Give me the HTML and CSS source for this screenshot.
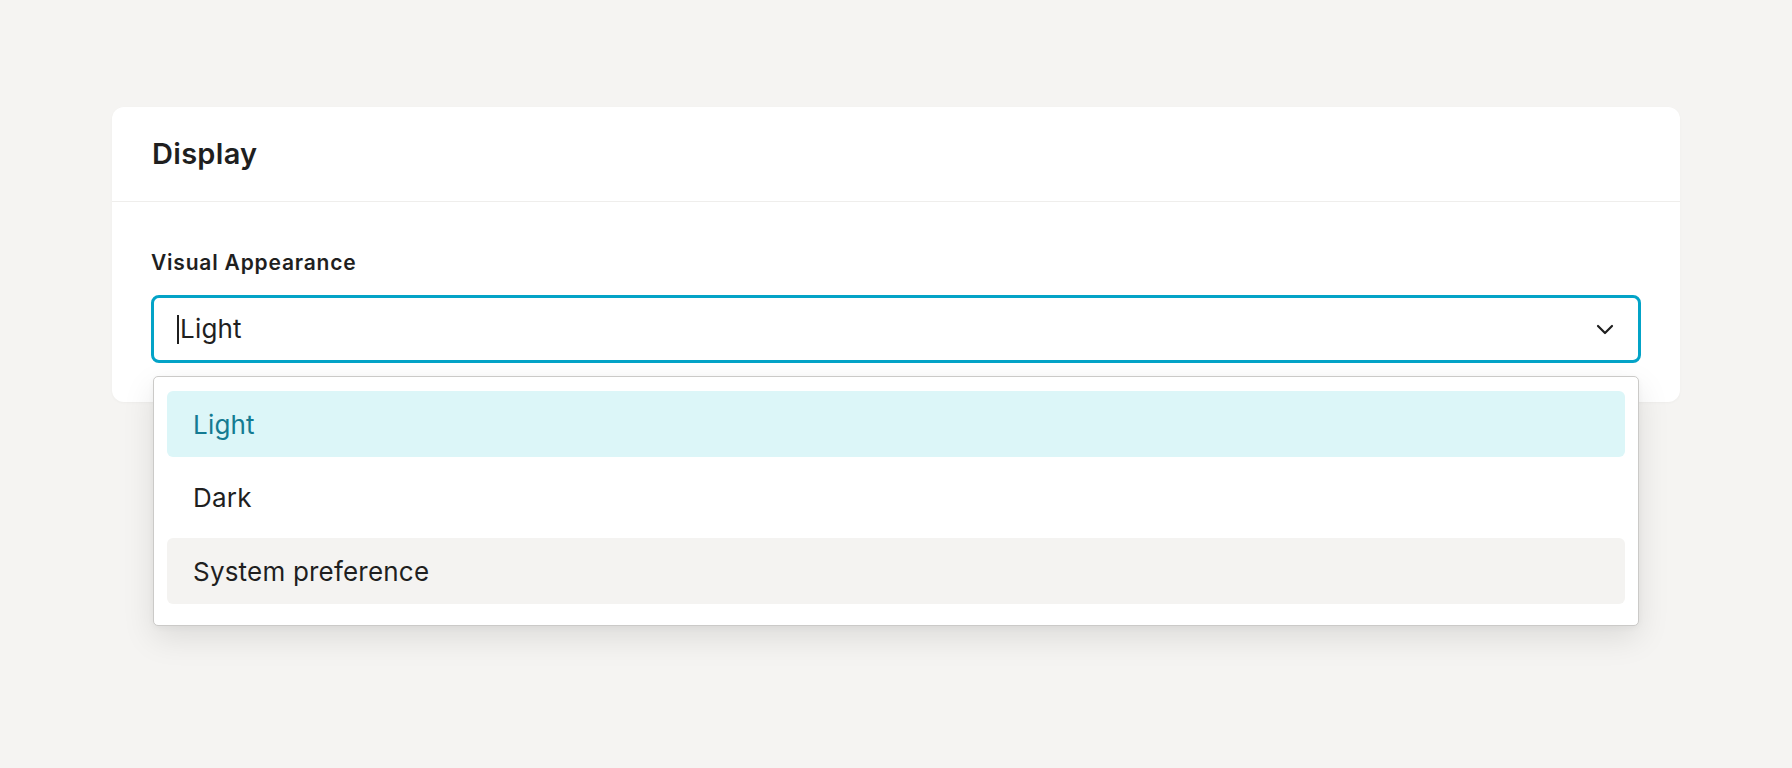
FILE: index.html
```html
<!DOCTYPE html>
<html lang="en">
<head>
<meta charset="utf-8">
<title>Display</title>
<link rel="stylesheet" href="styles.css">
</head>
<body>
  <section class="card">
    <header class="card-header">
      <h2 class="card-title">Display</h2>
    </header>
    <div class="card-body">
      <label class="field-label" for="appearance">Visual Appearance</label>
      <div class="field">
        <div class="select" id="appearance" role="combobox" aria-expanded="true">
          <span class="select-value"><span class="caret"></span>Light</span>
          <svg class="chevron" width="18" height="11" viewBox="0 0 18 11" aria-hidden="true">
            <path d="M2 2 L9 9 L16 2" fill="none" stroke="#1f1f1f" stroke-width="2.2" stroke-linecap="round" stroke-linejoin="round"/>
          </svg>
        </div>
        <ul class="menu" role="listbox">
          <li class="option is-selected" role="option" aria-selected="true">Light</li>
          <li class="option" role="option">Dark</li>
          <li class="option is-hover" role="option">System preference</li>
        </ul>
      </div>
    </div>
  </section>
</body>
</html>
```

FILE: styles.css
```css
* { box-sizing: border-box; }

html, body {
  margin: 0;
  padding: 0;
}

body {
  background: #f5f4f2;
  font-family: Inter, "Noto Sans", "Liberation Sans", sans-serif;
  color: #1f1f1f;
  padding: 107px 112px;
  min-height: 768px;
}

.card {
  background: #ffffff;
  border-radius: 12px;
  box-shadow: 0 1px 3px rgba(0, 0, 0, 0.03);
}

.card-header {
  height: 95px;
  display: flex;
  align-items: center;
  padding: 0 40px;
  border-bottom: 1px solid #efeeec;
}

.card-title {
  margin: 0;
  font-size: 29px;
  font-weight: 600;
  line-height: 36px;
  letter-spacing: 0.3px;
  color: #1f1f1f;
}

.card-body {
  padding: 47px 39px 39px;
}

.field-label {
  display: block;
  font-size: 21px;
  font-weight: 600;
  line-height: 28px;
  letter-spacing: 0.8px;
  color: #1f1f1f;
  margin-bottom: 18px;
}

.field {
  position: relative;
}

.select {
  height: 68px;
  border: 3px solid #03a3c7;
  border-radius: 8px;
  display: flex;
  align-items: center;
  justify-content: space-between;
  padding: 0 24px 0 23px;
  background: #fff;
}

.select-value {
  display: flex;
  align-items: center;
  font-size: 26px;
  line-height: 32px;
  letter-spacing: 0.2px;
}

.caret {
  display: inline-block;
  width: 2px;
  height: 29px;
  background: #1f1f1f;
  margin-right: 1px;
}

.chevron {
  display: block;
}

.menu {
  position: absolute;
  top: calc(100% + 13px);
  left: 2px;
  right: 2px;
  margin: 0;
  list-style: none;
  background: #fff;
  border: 1px solid #cbcac8;
  border-radius: 5px;
  padding: 14px 13px 21px;
  display: flex;
  flex-direction: column;
  gap: 7.5px;
  box-shadow: 0 12px 32px rgba(0, 0, 0, 0.10), 0 2px 6px rgba(0, 0, 0, 0.04);
  z-index: 2;
}

.option {
  height: 66px;
  display: flex;
  align-items: center;
  padding: 0 26px;
  border-radius: 6px;
  font-size: 26px;
  letter-spacing: 0.2px;
  color: #1f1f1f;
}

.option.is-selected {
  background: #dcf6f8;
  color: #147b92;
}

.option.is-hover {
  background: #f4f3f1;
}
```
